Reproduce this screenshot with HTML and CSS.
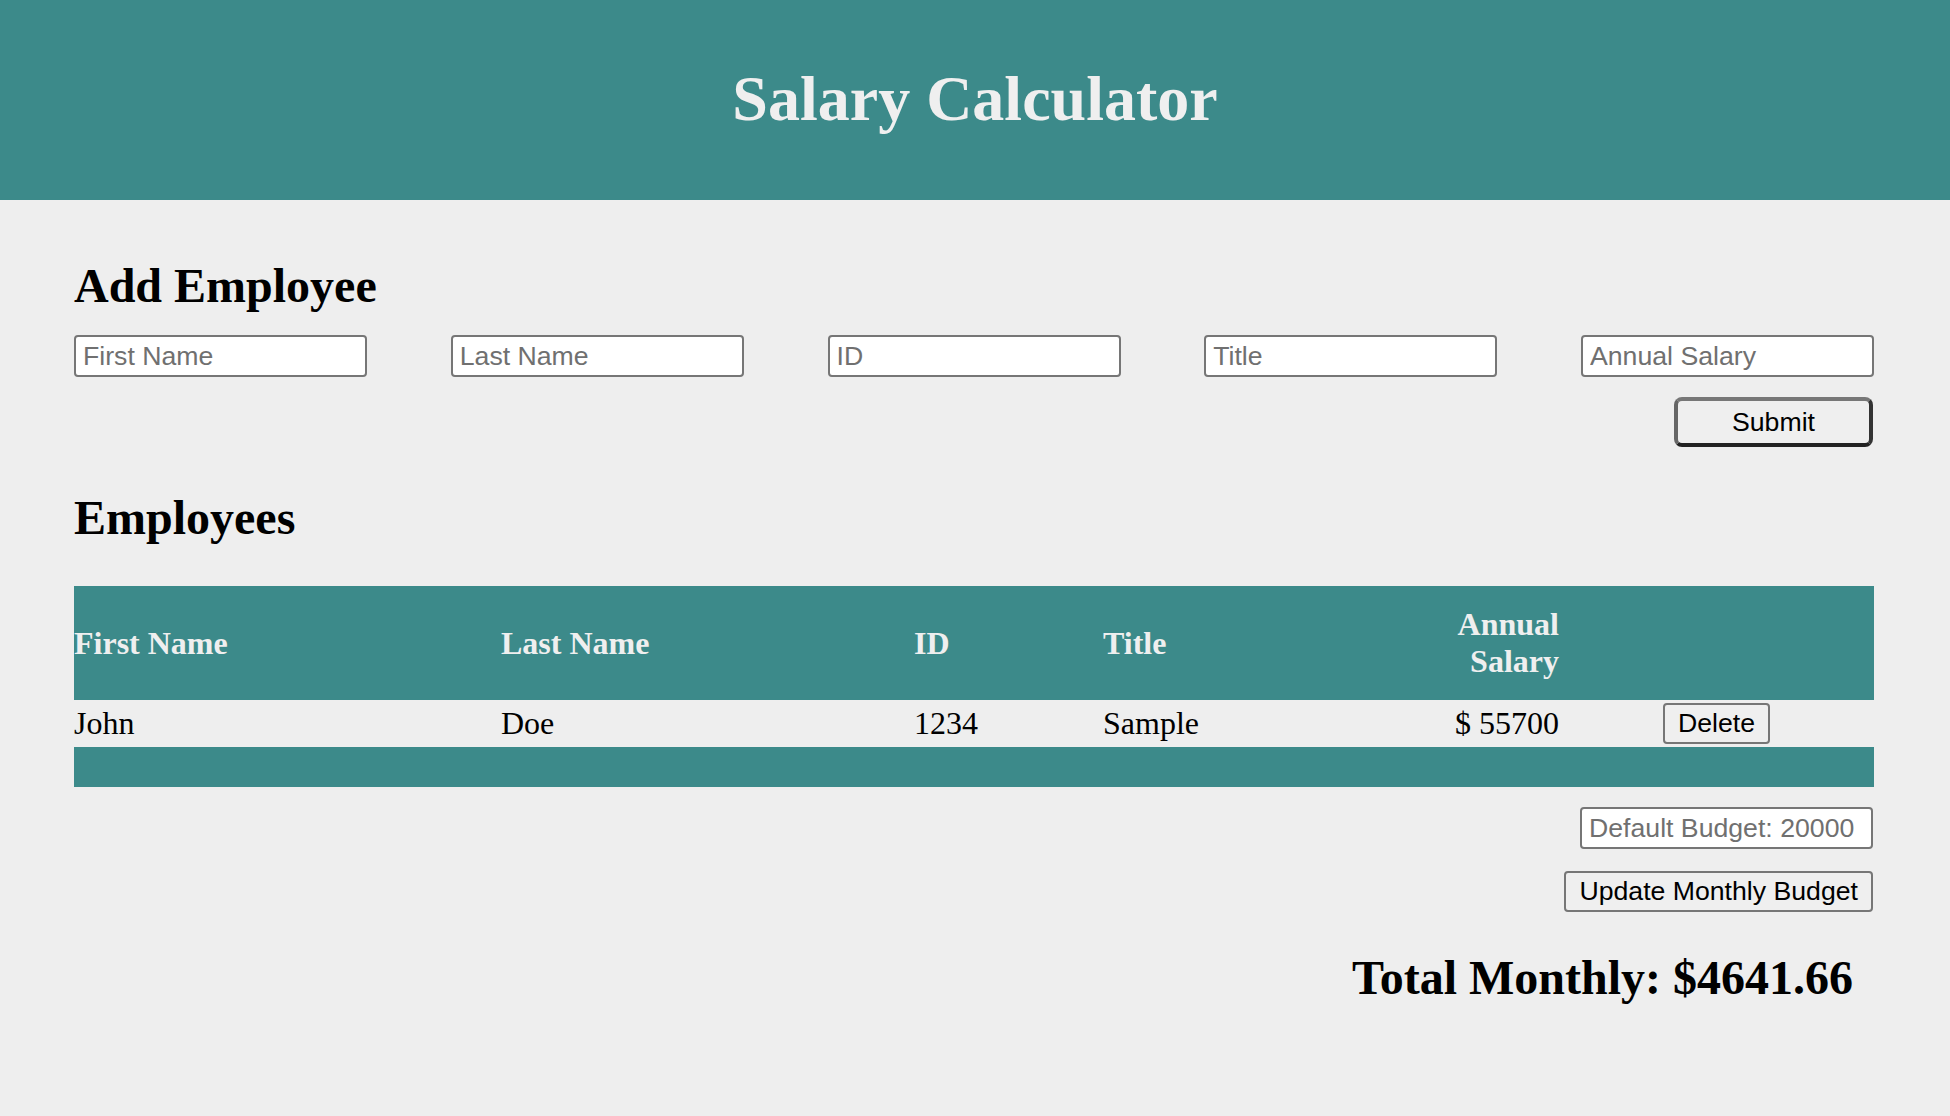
FILE: index.html
```html
<!DOCTYPE html>
<html lang="en">
<head>
<meta charset="utf-8">
<title>Salary Calculator</title>
<link rel="stylesheet" href="styles.css">
</head>
<body>
<header class="top-bar">
  <h1 class="app-title">Salary Calculator</h1>
</header>
<main class="content">
  <h2 class="section-title add-title">Add Employee</h2>
  <div class="input-row">
    <input class="field" type="text" placeholder="First Name">
    <input class="field" type="text" placeholder="Last Name">
    <input class="field" type="text" placeholder="ID">
    <input class="field" type="text" placeholder="Title">
    <input class="field" type="text" placeholder="Annual Salary">
  </div>
  <div class="submit-row">
    <button class="btn btn-submit" type="button">Submit</button>
  </div>

  <h2 class="section-title emp-title">Employees</h2>
  <table class="emp-table">
    <colgroup>
      <col class="c1"><col class="c2"><col class="c3"><col class="c4"><col class="c5"><col class="c6">
    </colgroup>
    <thead>
      <tr class="head-row">
        <th>First Name</th>
        <th>Last Name</th>
        <th>ID</th>
        <th>Title</th>
        <th class="num">Annual Salary</th>
        <th></th>
      </tr>
    </thead>
    <tbody>
      <tr class="data-row">
        <td>John</td>
        <td>Doe</td>
        <td>1234</td>
        <td>Sample</td>
        <td class="num">$ 55700</td>
        <td class="act"><button class="btn" type="button">Delete</button></td>
      </tr>
    </tbody>
    <tfoot>
      <tr class="foot-row"><td colspan="6"></td></tr>
    </tfoot>
  </table>

  <div class="budget">
    <input class="field" type="text" placeholder="Default Budget: 20000">
    <button class="btn" type="button">Update Monthly Budget</button>
  </div>
  <h2 class="section-title total">Total Monthly: $4641.66</h2>
</main>
</body>
</html>
```
FILE: styles.css
```css
html, body {
  margin: 0;
  padding: 0;
}
body {
  background: #eeeeee;
  font-family: "Liberation Serif", "Times New Roman", serif;
  font-size: 32px;
  color: #000;
}
.top-bar {
  height: 200px;
  background: #3c8a8a;
  display: flex;
  align-items: center;
  justify-content: center;
  padding-bottom: 3px;
  box-sizing: border-box;
}
.app-title {
  margin: 0;
  font-size: 64px;
  font-weight: bold;
  color: #efefef;
}
.content {
  padding: 0 76px 0 74px;
}
.section-title {
  margin: 0;
  font-size: 48px;
  font-weight: bold;
}
.add-title {
  margin-top: 58px;
}
.input-row {
  margin-top: 22px;
  display: flex;
  justify-content: space-between;
}
.field {
  box-sizing: border-box;
  width: 293px;
  height: 42px;
  margin: 0;
  padding: 0 7px;
  border: 2px solid #767676;
  border-radius: 4px;
  background: #fff;
  font-family: "Liberation Sans", Arial, sans-serif;
  font-size: 26.67px;
  color: #000;
}
.field::placeholder {
  color: #707070;
}
.submit-row {
  margin-top: 20px;
  display: flex;
  justify-content: flex-end;
  padding-right: 1px;
}
.btn {
  margin: 0;
  padding: 3px 13px;
  border: 2px solid #767676;
  border-radius: 4px;
  background: #efefef;
  font-family: "Liberation Sans", Arial, sans-serif;
  font-size: 26.67px;
  line-height: 31px;
  color: #000;
}
.btn-submit {
  box-sizing: border-box;
  width: 199px;
  height: 50px;
  border-width: 4px;
  border-radius: 8px;
  border-color: #777 #333 #222 #666;
}
.emp-title {
  margin-top: 43px;
}
.emp-table {
  margin-top: 41px;
  width: 100%;
  table-layout: fixed;
  border-collapse: collapse;
  border-spacing: 0;
}
.c1 { width: 427px; }
.c2 { width: 413px; }
.c3 { width: 189px; }
.c4 { width: 297px; }
.c5 { width: 159px; }
.c6 { width: 315px; }
.emp-table th,
.emp-table td {
  padding: 0;
  vertical-align: middle;
  text-align: left;
}
.head-row {
  background: #3c8a8a;
  height: 114px;
}
.head-row th {
  color: #efefef;
  font-weight: bold;
}
.data-row {
  height: 47px;
}
.data-row td {
  padding: 2px 0;
}
.emp-table .num {
  text-align: right;
}
.emp-table .act {
  text-align: center;
}
.foot-row {
  background: #3c8a8a;
  height: 40px;
}
.budget {
  margin-top: 20px;
  display: flex;
  flex-direction: column;
  align-items: flex-end;
  gap: 22px;
  padding-right: 1px;
}
.total {
  margin-top: 38px;
  text-align: right;
  padding-right: 21px;
}
```
